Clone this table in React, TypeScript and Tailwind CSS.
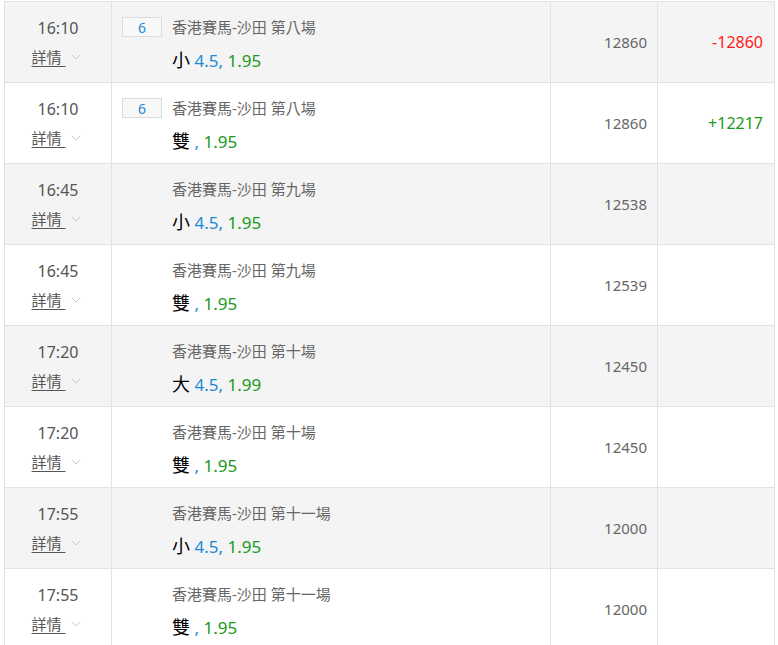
import { ChevronDown } from "lucide-react";

type Row = {
  time: string;
  badge?: string;
  race: string;
  pick: string;
  line?: string;
  odds: string;
  stake: string;
  result?: string;
};

const rows: Row[] = [
  { time: "16:10", badge: "6", race: "香港賽馬-沙田 第八場", pick: "小", line: "4.5", odds: "1.95", stake: "12860", result: "-12860" },
  { time: "16:10", badge: "6", race: "香港賽馬-沙田 第八場", pick: "雙", odds: "1.95", stake: "12860", result: "+12217" },
  { time: "16:45", race: "香港賽馬-沙田 第九場", pick: "小", line: "4.5", odds: "1.95", stake: "12538" },
  { time: "16:45", race: "香港賽馬-沙田 第九場", pick: "雙", odds: "1.95", stake: "12539" },
  { time: "17:20", race: "香港賽馬-沙田 第十場", pick: "大", line: "4.5", odds: "1.99", stake: "12450" },
  { time: "17:20", race: "香港賽馬-沙田 第十場", pick: "雙", odds: "1.95", stake: "12450" },
  { time: "17:55", race: "香港賽馬-沙田 第十一場", pick: "小", line: "4.5", odds: "1.95", stake: "12000" },
  { time: "17:55", race: "香港賽馬-沙田 第十一場", pick: "雙", odds: "1.95", stake: "12000" },
];

export default function App() {
  return (
    <div
      className="min-h-[645px] bg-white pl-1 pt-px"
      style={{ fontFamily: '"Noto Sans", "Noto Sans CJK TC", sans-serif' }}
    >
      <table className="w-[770px] table-fixed border-collapse">
        <colgroup>
          <col className="w-[107px]" />
          <col className="w-[439px]" />
          <col className="w-[107px]" />
          <col className="w-[117px]" />
        </colgroup>
        <tbody>
          {rows.map((r, i) => (
            <tr key={i} className={i % 2 === 0 ? "h-[81px] bg-[#f4f4f4]" : "h-[81px] bg-white"}>
              <td className="border border-[#e2e2e2] p-0 text-center align-top">
                <div className="pt-[14px] text-[16px] leading-[24px] text-[#555]">{r.time}</div>
                <div className="mt-[6px] flex items-center justify-center">
                  <span className="whitespace-pre text-[15px] leading-[22px] text-[#555] underline underline-offset-[3px]">
                    {"詳情 "}
                  </span>
                  <ChevronDown className="ml-[3px] mt-[-1px] h-[16px] w-[16px] text-[#c4c4c4]" strokeWidth={1.3} />
                </div>
              </td>
              <td className="border border-[#e2e2e2] p-0 align-top">
                <div className="flex pl-[10px] pt-[15px]">
                  <div className="w-[50px] shrink-0">
                    {r.badge && (
                      <div className="flex h-[20px] w-[40px] items-center justify-center border border-[#dcdcdc] bg-[#f8f8f8] text-[14px] text-[#1a8ad8]">
                        {r.badge}
                      </div>
                    )}
                  </div>
                  <div>
                    <div className="text-[15px] leading-[20px] text-[#666]">{r.race}</div>
                    <div className="mt-[11px] text-[18px] leading-[24px]">
                      <span className="text-black">{r.pick}</span>
                      <span className="text-[17px]">
                        {r.line ? (
                          <span className="text-[#1a8ad8]"> {r.line}, </span>
                        ) : (
                          <span className="text-[#1a8ad8]"> , </span>
                        )}
                        <span className="text-[#1a9a1a]">{r.odds}</span>
                      </span>
                    </div>
                  </div>
                </div>
              </td>
              <td className="border border-[#e2e2e2] pr-[10px] text-right text-[15px] text-[#666]">{r.stake}</td>
              <td className="border border-[#e2e2e2] pr-[11px] text-right text-[16px]">
                {r.result && (
                  <span className={r.result.startsWith("-") ? "text-[#ff1a1a]" : "text-[#1a9a1a]"}>{r.result}</span>
                )}
              </td>
            </tr>
          ))}
        </tbody>
      </table>
    </div>
  );
}
